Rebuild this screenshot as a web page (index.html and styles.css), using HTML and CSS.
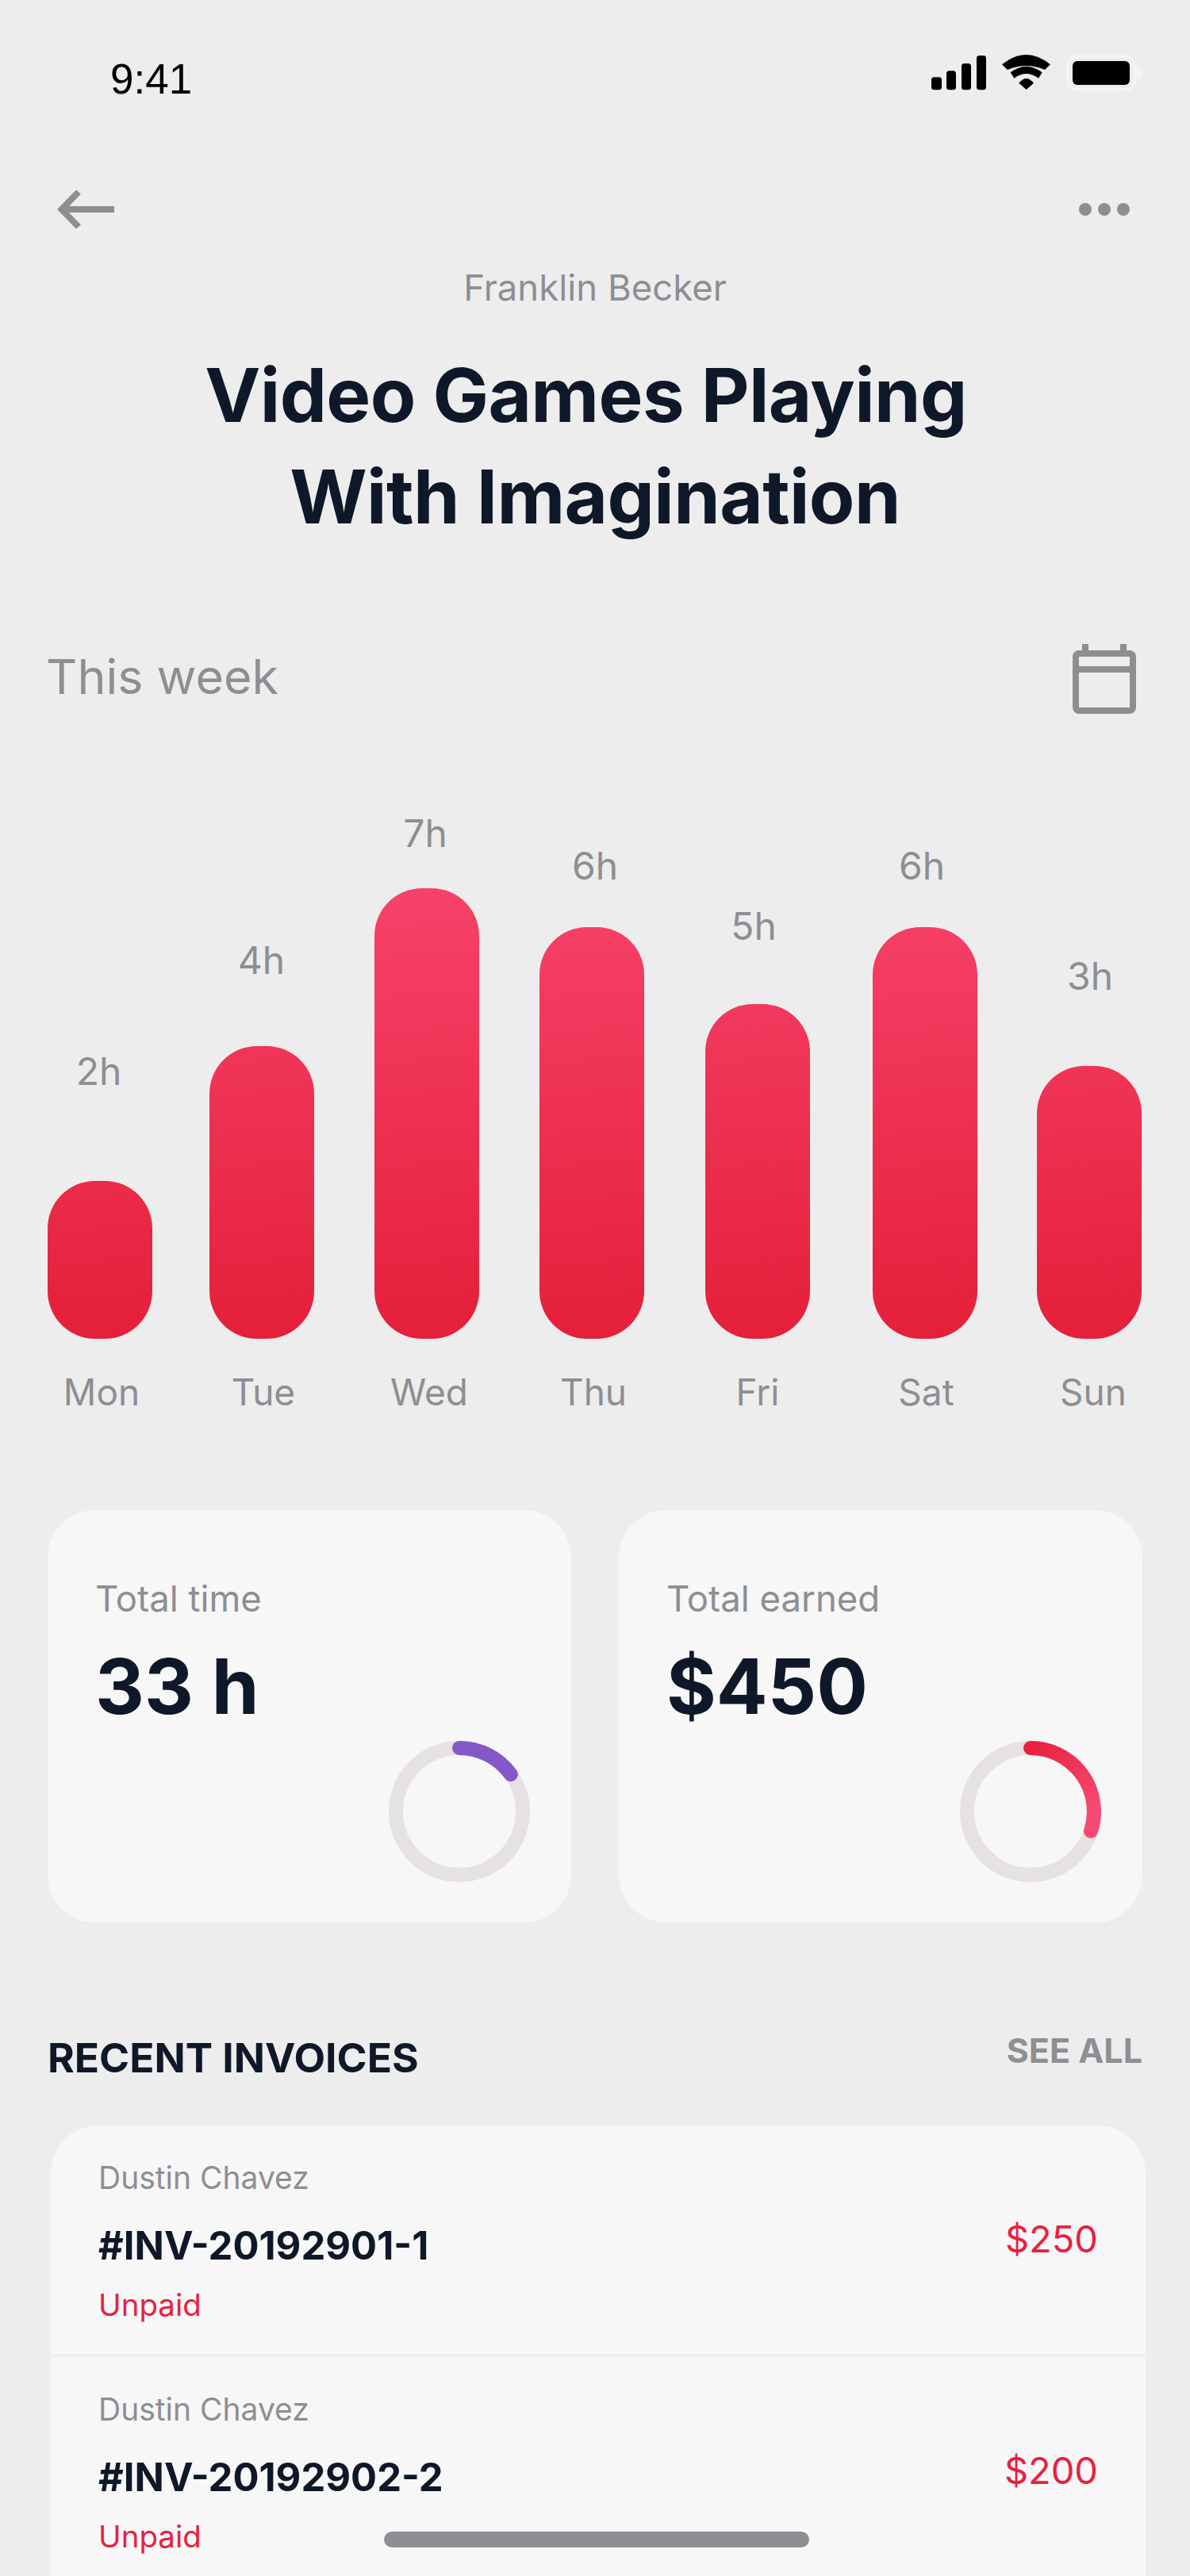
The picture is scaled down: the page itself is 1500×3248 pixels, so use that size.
FILE: index.html
```html
<!DOCTYPE html>
<html lang="en">
<head>
<meta charset="utf-8">
<title>Video Games Playing With Imagination</title>
<link rel="stylesheet" href="styles.css">
</head>
<body>
<div class="screen">
  <div class="status">
    <span class="time">9:41</span>
    <div class="status-icons">
      <svg class="sig" width="70" height="44" viewBox="0 0 70 44"><rect x="0" y="27.300" width="13" height="16" rx="3.500"/><rect x="19" y="19.300" width="12" height="24" rx="3.500"/><rect x="38" y="10" width="12" height="33.300" rx="3.500"/><rect x="57" y="0" width="12" height="43.300" rx="3.500"/></svg>
      <svg class="wifi" width="61" height="44" viewBox="0 0 61 44"><path d="M0 12.300 Q30.700 -12.300 61 12.300 L54 19 Q30.700 9 7 19Z"/><path d="M10.700 22.300 Q30.700 7.100 50.700 22.300 L46 29.700 Q30.700 18.300 15.300 29.700Z"/><path d="M21.300 35.700 Q30.700 24.300 40 35.700 L30.700 44Z"/></svg>
      <div class="battery"><div class="battery-fill"></div></div>
    </div>
  </div>

  <div class="nav">
    <svg width="72" height="48" viewBox="0 0 72 48"><path d="M72 24H6M27 2 L5.600 24 L27 46" fill="none" stroke="#8e8e8e" stroke-width="8"/></svg>
    <div class="dots"><i></i><i></i><i></i></div>
  </div>

  <p class="author">Franklin Becker</p>
  <h1 class="title"><span class="title-first">Video Games Playing</span><br>With Imagination</h1>

  <div class="week">
    <span>This week</span>
    <svg width="80" height="88" viewBox="0 0 80 88"><rect x="4" y="12" width="72" height="72" rx="4" fill="none" stroke="#8e8e8e" stroke-width="8"/><path d="M4 32H76M16 0V12M64 0V12" fill="none" stroke="#8e8e8e" stroke-width="8"/></svg>
  </div>

  <div class="chart">
    <div class="col c1"><span class="hrs">2h</span><div class="bar" style="height:199px"></div><span class="day">Mon</span></div>
    <div class="col c2"><span class="hrs">4h</span><div class="bar" style="height:369px"></div><span class="day">Tue</span></div>
    <div class="col c3"><span class="hrs">7h</span><div class="bar" style="height:568px"></div><span class="day">Wed</span></div>
    <div class="col c4"><span class="hrs">6h</span><div class="bar" style="height:519px"></div><span class="day">Thu</span></div>
    <div class="col c5"><span class="hrs">5h</span><div class="bar" style="height:422px"></div><span class="day">Fri</span></div>
    <div class="col c6"><span class="hrs">6h</span><div class="bar" style="height:519px"></div><span class="day">Sat</span></div>
    <div class="col c7"><span class="hrs">3h</span><div class="bar" style="height:344px"></div><span class="day">Sun</span></div>
  </div>

  <div class="cards">
    <div class="card">
      <p class="card-label">Total time</p>
      <p class="card-value">33 h</p>
      <svg class="ring" width="178" height="178" viewBox="0 0 178 178">
        <circle cx="89" cy="89" r="80" fill="none" stroke="#e5e2e1" stroke-width="18"/>
        <path d="M89 9 A80 80 0 0 1 153.800 42.300" fill="none" stroke="#8558c8" stroke-width="18" stroke-linecap="round"/>
      </svg>
    </div>
    <div class="card">
      <p class="card-label">Total earned</p>
      <p class="card-value">$450</p>
      <svg class="ring" width="178" height="178" viewBox="0 0 178 178">
        <defs>
          <linearGradient id="gr" gradientUnits="userSpaceOnUse" x1="89" y1="9" x2="169" y2="89"><stop offset="0" stop-color="#e8213f"/><stop offset="1" stop-color="#f84a72"/></linearGradient>
        </defs>
        <circle cx="89" cy="89" r="80" fill="none" stroke="#e5e2e1" stroke-width="18"/>
        <path d="M89 9 A80 80 0 0 1 165 113.700" fill="none" stroke="url(#gr)" stroke-width="18" stroke-linecap="round"/>
      </svg>
    </div>
  </div>

  <div class="recent-head">
    <h2>RECENT INVOICES</h2>
    <span>SEE ALL</span>
  </div>

  <div class="invoices">
    <div class="invoice">
      <div><p class="inv-name">Dustin Chavez</p><p class="inv-id">#INV-20192901-1</p><p class="inv-status">Unpaid</p></div>
      <span class="inv-amt">$250</span>
    </div>
    <div class="invoice">
      <div><p class="inv-name">Dustin Chavez</p><p class="inv-id">#INV-20192902-2</p><p class="inv-status">Unpaid</p></div>
      <span class="inv-amt">$200</span>
    </div>
  </div>

  <div class="home"></div>
</div>
</body>
</html>
```
FILE: styles.css
```css
* { box-sizing: border-box; margin: 0; padding: 0; }
html, body { width: 1500px; height: 3248px; overflow: hidden; }
body { background: #ededed; font-family: Inter, "Liberation Sans", sans-serif; }
.screen { position: relative; width: 1500px; height: 3248px; overflow: hidden; background: #ededed; }

.status { height: 240px; padding: 68px 59px 0 139px; display: flex; justify-content: space-between; align-items: flex-start; }
.time { font-family: "Liberation Sans", sans-serif; font-size: 53px; line-height: 64px; color: #000; }
.status-icons { display: flex; align-items: flex-start; padding-top: 1px; }
.status-icons svg { fill: #000; }
.sig { margin: 1px 19px 0 0; }
.wifi { margin-right: 20px; }
.battery { width: 88px; height: 46px; border: 4px solid #f4f4f4; border-radius: 14px; padding: 4px; position: relative; margin-right: 9px; }
.battery::after { content: ""; position: absolute; right: -13px; top: 10px; width: 9px; height: 18px; border-radius: 0 9px 9px 0; background: #f4f4f4; }
.battery-fill { width: 100%; height: 100%; background: #000; border-radius: 6px; }

.nav { display: flex; justify-content: space-between; align-items: center; padding: 0 76px 0 72px; height: 48px; }
.dots { display: flex; gap: 8px; }
.dots i { width: 16px; height: 16px; border-radius: 50%; background: #8e8e8e; }

.author { text-align: center; font-size: 45.500px; line-height: 56px; color: #8e8e93; margin-top: 47px; }
.title { text-align: center; font-size: 94px; line-height: 128px; font-weight: 700; color: #0f1829; margin-top: 43px; letter-spacing: -0.600px; }
.title-first { display: inline-block; margin-right: 23px; }

.week { display: flex; justify-content: space-between; align-items: flex-start; padding: 0 68px 0 58px; margin-top: 122px; height: 88px; }
.week span { font-size: 61px; line-height: 72px; margin-top: 5px; color: #8e8e93; }

.chart { display: flex; align-items: flex-end; padding-left: 60px; height: 883px; }
.col { width: 132px; display: flex; flex-direction: column; align-items: center; }
.c2 { margin-left: 72px; } .c3 { margin-left: 76px; } .c4 { margin-left: 76px; } .c5 { margin-left: 77px; } .c6 { margin-left: 79px; } .c7 { margin-left: 75px; }
.hrs { font-size: 48px; line-height: 56px; color: #8e8e93; white-space: nowrap; }
.bar { width: 132px; border-radius: 60px; background: linear-gradient(175deg, #f7426a 0%, #e41f39 100%) left bottom / 100% 568px no-repeat; }
.day { font-size: 46px; line-height: 56px; color: #8e8e93; margin-top: 39px; white-space: nowrap; }

.c1 .hrs { margin: 0 3px 110px 0; }
.c2 .hrs { margin: 0 1px 80px 0; }
.c3 .hrs { margin: 0 4px 41px 0; }
.c4 .hrs { margin: 0 0 49px 8px; }
.c5 .hrs { margin: 0 10px 70px 0; }
.c6 .hrs { margin: 0 8px 49px 0; }
.c7 .hrs { margin: 0 0 85px 2px; }
.c1 .day { margin-left: 4px; }
.c2 .day { margin-left: 4px; }
.c3 .day { margin-left: 6px; }
.c4 .day { margin-left: 4px; }
.c6 .day { margin-left: 3px; }
.c7 .day { margin-left: 10px; }

.cards { display: flex; gap: 60px; padding: 0 60px; margin-top: 121px; }
.card { position: relative; width: 660px; height: 520px; border-radius: 60px; background: #f7f7f7; padding: 84px 60px 0; }
.card-label { font-size: 45.500px; line-height: 56px; color: #8e8e93; }
.card-value { font-size: 96px; line-height: 116px; font-weight: 700; color: #0f1829; margin-top: 24px; }
.ring { position: absolute; right: 52px; top: 291px; }

.recent-head { display: flex; justify-content: space-between; padding: 0 60px; margin-top: 136px; height: 120px; }
.recent-head h2 { font-size: 51.500px; line-height: 62px; margin-top: 3px; font-weight: 700; color: #0f1829; }
.recent-head span { font-size: 43px; line-height: 50px; font-weight: 700; color: #8e8e93; }

.invoices { margin: 0 56px 0 64px; height: 568px; background: #f7f7f7; border-radius: 60px 60px 0 0; }
.invoice { display: flex; justify-content: space-between; height: 292px; padding: 42px 60px 0; border-bottom: 4px solid #efefef; }
.invoice:last-child { border-bottom: 0; }
.inv-name { font-size: 39px; line-height: 48px; color: #8e8e93; }
.inv-id { font-size: 49px; line-height: 56px; font-weight: 700; color: #0f1829; margin-top: 34px; }
.inv-status { font-size: 38.500px; line-height: 48px; color: #e8213f; margin-top: 22px; }
.inv-amt { font-size: 47px; line-height: 56px; color: #e8213f; margin-top: 73px; }

.home { position: absolute; left: 484px; top: 3192px; width: 536px; height: 20px; border-radius: 10px; background: #8e8e93; }
```
